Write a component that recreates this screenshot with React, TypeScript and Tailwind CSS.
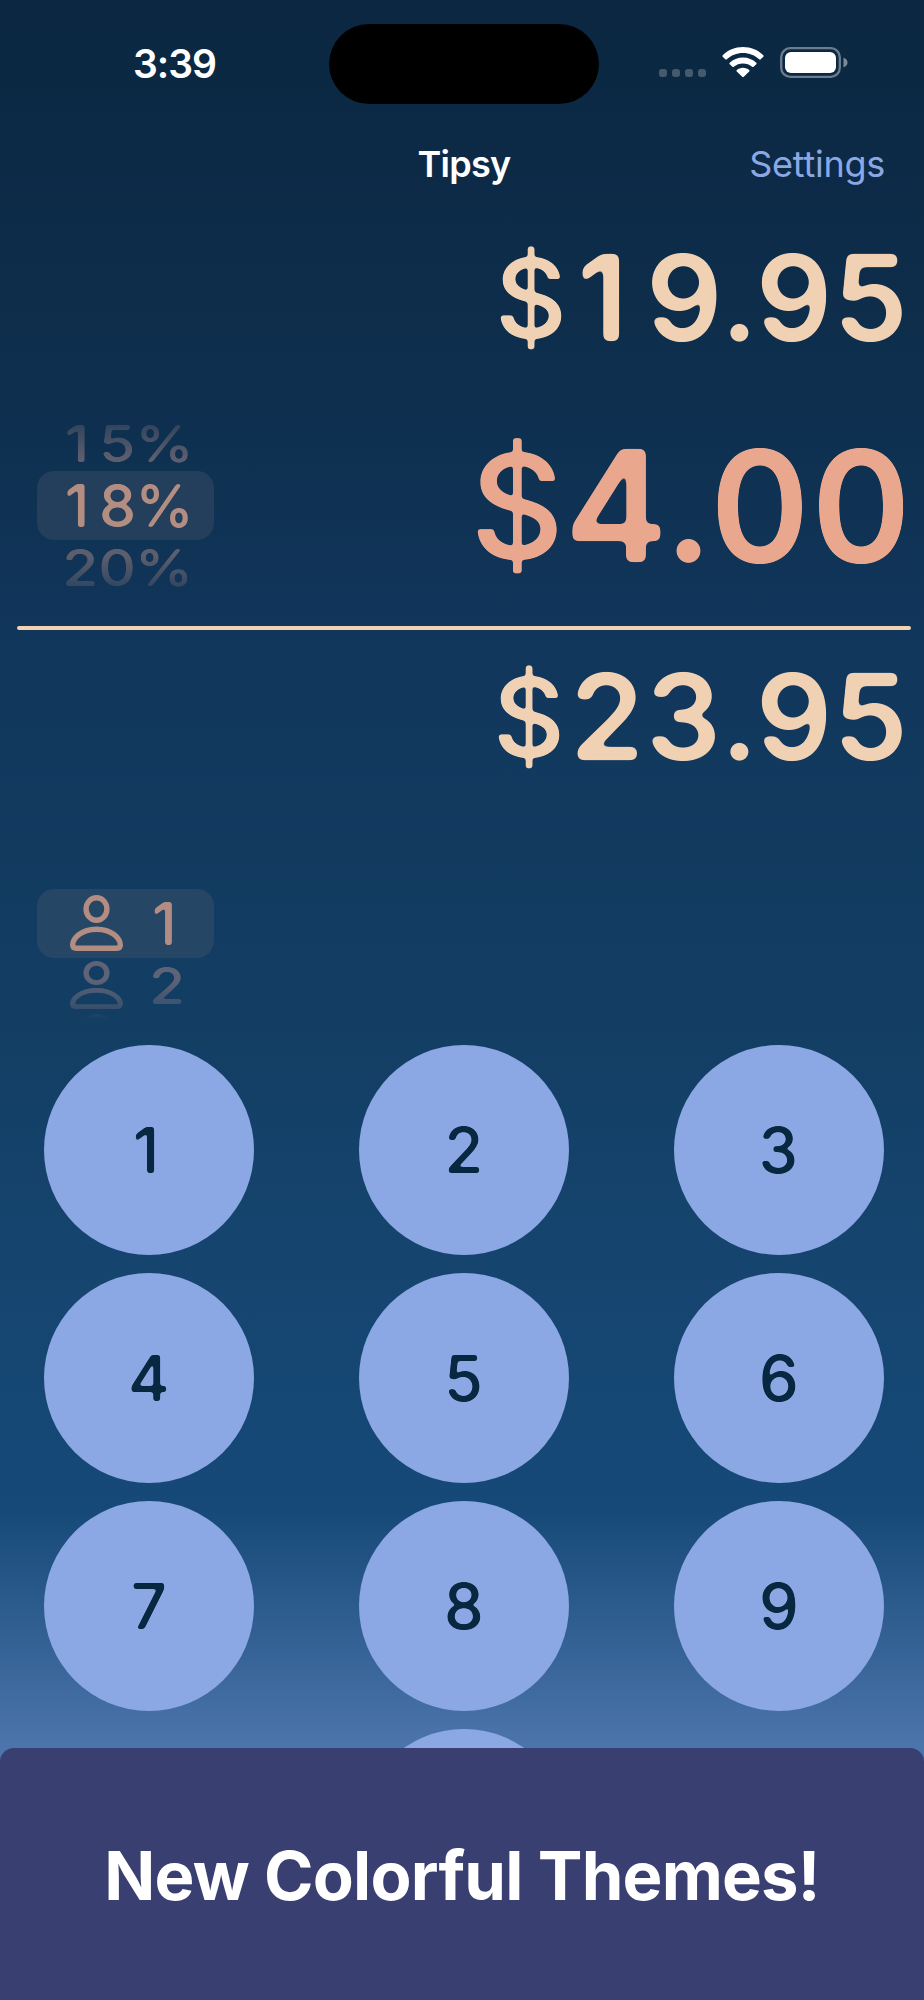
import React from 'react';

const keys = ['1', '2', '3', '4', '5', '6', '7', '8', '9'];

// Softens glyph corners so that the digits get rounded terminals.
function RoundingFilter({ id, radius }: { id: string; radius: number }) {
  return (
    <filter id={id} x="-5%" y="-5%" width="110%" height="110%" colorInterpolationFilters="sRGB">
      <feGaussianBlur stdDeviation={radius} />
      <feColorMatrix values={`1 0 0 0 0  0 1 0 0 0  0 0 1 0 0  0 0 0 ${radius * 3} ${-radius * 3 * 0.48 + 0.5}`} />
    </filter>
  );
}

// Fixed-width digits, with the plain "1" instead of the tabular one.
function Digits({ value }: { value: string }) {
  return (
    <>
      {value.split('').map((c, i) =>
        c === '1' ? (
          <span key={i} className="inline-block w-[0.64em] pr-[0.09em] text-center tracking-normal">{c}</span>
        ) : (
          <span key={i} className="tabular-nums">{c}</span>
        )
      )}
    </>
  );
}

function PersonIcon({ className }: { className?: string }) {
  return (
    <svg viewBox="0 0 53 56" fill="none" stroke="currentColor" strokeWidth="5.4" preserveAspectRatio="none" className={className}>
      <ellipse cx="26.5" cy="14" rx="10.4" ry="11.3" />
      <path d="M6.2 53.3C4 53.3 2.7 52 2.7 49.8C2.7 43.500 11 34.200 26.500 34.200C42 34.200 50.300 43.500 50.300 49.800C50.300 52 49 53.300 46.800 53.300Z" strokeLinejoin="round" />
    </svg>
  );
}

function Amount({ value }: { value: string }) {
  return (
    <div className="flex text-[119px] leading-none font-semibold tracking-[0.3px] whitespace-nowrap text-[#f0d1b3]">
      <span className="mr-[3px] origin-right scale-x-[0.94] scale-y-[0.93] font-[550] [filter:url(#round-sm)]">$</span>
      <span className="[filter:url(#round-md)]">
        <Digits value={value} />
      </span>
    </div>
  );
}

function StatusBar() {
  return (
    <div className="flex h-32 items-center">
      <div className="-mt-0.5 w-[329px] pl-[133px] text-[39px] leading-none font-semibold tracking-[-1px]">3:39</div>
      <div className="h-20 w-[270px] rounded-full bg-black" />
      <div className="-mt-[3px] flex items-end pl-[60px]">
        <div className="mb-px flex gap-[5px]">
          {[0, 1, 2, 3].map((i) => (
            <span key={i} className="size-2 rounded-[3px] bg-[#465a6e]" />
          ))}
        </div>
        <svg width="42" height="31" viewBox="0 0 42 31" fill="white" className="ml-4">
          <path d="M21 0C29 0 36.200 3.100 41.300 8.200Q42 9 41.300 9.800L38.700 12.300Q38 13 37.200 12.300C33 8.300 27.300 6 21 6S9 8.300 4.800 12.300Q4 13 3.300 12.300L.7 9.800Q0 9 .7 8.200C5.800 3.100 13 0 21 0Z" />
          <path d="M21 10.500C26.200 10.500 30.900 12.500 34.300 15.700Q35 16.500 34.300 17.200L31.600 19.800Q30.900 20.400 30.200 19.800C27.700 17.600 24.500 16.400 21 16.400S14.300 17.600 11.800 19.800Q11.100 20.400 10.400 19.800L7.700 17.200Q7 16.500 7.700 15.700C11.100 12.500 15.800 10.500 21 10.500Z" />
          <path d="M21 20.800C23.400 20.800 25.600 21.700 27.200 23.100Q27.900 23.800 27.200 24.500L21.800 29.800Q21 30.500 20.200 29.800L14.800 24.500Q14.100 23.800 14.800 23.100C16.400 21.700 18.600 20.800 21 20.800Z" />
        </svg>
        <svg width="68" height="31" viewBox="0 0 68 31" className="ml-4">
          <rect x="1.200" y="1.200" width="58.600" height="28.600" rx="9" fill="none" stroke="#6b7d8c" strokeWidth="2.300" />
          <rect x="5" y="5" width="51" height="21" rx="6" fill="white" />
          <path d="M63.500 10.500C66 11.500 67.500 13.300 67.500 15.500S66 19.500 63.500 20.500Z" fill="#7b8b99" />
        </svg>
      </div>
    </div>
  );
}

export default function App() {
  return (
    <div className="relative h-[2000px] w-[924px] overflow-hidden bg-[linear-gradient(180deg,#0b2741_0px,#0e2f4e_400px,#11365b_640px,#133e64_1030px,#15456f_1270px,#164978_1510px,#4c75ac_1748px,#4c75ac_2000px)] font-['Inter',sans-serif] text-white">
      <svg className="absolute size-0" aria-hidden="true">
        <RoundingFilter id="round-lg" radius={3.4} />
        <RoundingFilter id="round-md" radius={3} />
        <RoundingFilter id="round-sm" radius={1.5} />
      </svg>

      <StatusBar />

      <nav className="grid h-[72px] grid-cols-3 items-center text-[36px] leading-none">
        <span />
        <h1 className="pl-1 text-center font-semibold tracking-[-0.7px]">Tipsy</h1>
        <button className="pr-[39px] text-right tracking-[-0.25px] text-[#8ba8e5]">Settings</button>
      </nav>

      <section className="flex h-[196px] items-center justify-end pr-[14px]">
        <Amount value="19.95" />
      </section>

      <section className="flex h-[219px] items-center justify-between pr-[12px] pl-[37px]">
        <div className="flex w-[177px] flex-col items-center text-[59px] leading-none font-[540] tracking-[-1.5px] whitespace-nowrap">
          <div className="flex h-[55px] items-center text-[#5c5e6d] [mask-image:linear-gradient(180deg,rgba(0,0,0,0.4)_10%,black_75%)]">
            <span className="scale-y-[0.86] pl-0.5 [filter:url(#round-sm)]">
              <Digits value="15%" />
            </span>
          </div>
          <div className="flex h-[69px] w-full items-center justify-center rounded-[17px] bg-[#243f5c]">
            <span className="pl-0.5 text-[#b38d82] [filter:url(#round-sm)]">
              <Digits value="18%" />
            </span>
          </div>
          <div className="flex h-[55px] items-center text-[#5c5e6d] [mask-image:linear-gradient(180deg,black_30%,rgba(0,0,0,0.4)_90%)]">
            <span className="scale-y-[0.86] pl-0.5 [filter:url(#round-sm)]">
              <Digits value="20%" />
            </span>
          </div>
        </div>
        <div className="flex text-[155px] leading-none font-[590] tracking-[0.8px] text-[#e9a78e]">
          <span className="mr-px origin-right scale-x-[0.94] scale-y-[0.93] font-[550] [filter:url(#round-sm)]">$</span>
          <span className="tabular-nums [filter:url(#round-lg)]">4.00</span>
        </div>
      </section>

      <div className="mt-[11px] mr-[13px] ml-[17px] h-1 rounded-full bg-[#f3d2b1]" />

      <section className="flex h-[174px] items-center justify-end pr-[14px]">
        <Amount value="23.95" />
      </section>

      <section className="flex h-[239px] items-center pl-[37px]">
        <div className="w-[177px] pt-[69px] text-[59px] leading-none font-[540]">
          <div className="flex h-[69px] items-center rounded-[17px] bg-[#264666] pl-[33px] text-[#b38d82]">
            <PersonIcon className="-mt-0.5 h-14 w-[53px]" />
            <span className="w-[86px] pl-0.5 text-center [filter:url(#round-sm)]">
              <Digits value="1" />
            </span>
          </div>
          <div className="flex h-[55px] items-center pl-[33px] text-[#5e6377] [mask-image:linear-gradient(180deg,black_40%,rgba(0,0,0,0.4)_100%)]">
            <PersonIcon className="-mt-0.5 h-12 w-[53px]" />
            <span className="w-[86px] scale-y-[0.86] pl-0.5 text-center [filter:url(#round-sm)]">
              <Digits value="2" />
            </span>
          </div>
          <div className="h-[14px] overflow-hidden pl-[33px] text-[#1f4566] [mask-image:linear-gradient(180deg,black_10%,transparent_50%)]">
            <PersonIcon className="mt-px h-9 w-[53px]" />
          </div>
        </div>
      </section>

      <main className="mt-0.5 grid grid-cols-[repeat(3,210px)] justify-between gap-y-[18px] pr-10 pl-11 text-[63px] leading-none font-medium text-[#072840]">
        {keys.map((k) => (
          <button key={k} className="flex size-[210px] items-center justify-center rounded-full bg-[#8ba8e5]">
            <span className="[filter:url(#round-sm)]">
              <Digits value={k} />
            </span>
          </button>
        ))}
        <span />
        <button className="size-[210px] rounded-full bg-[#8ba8e5]" aria-label="0" />
      </main>

      <footer className="absolute inset-x-0 bottom-0 flex h-[252px] items-center justify-center rounded-t-[14px] bg-[#393f70]">
        <p className="pt-0.5 text-[67px] leading-none font-bold tracking-[-0.8px]">New Colorful Themes!</p>
      </footer>
    </div>
  );
}
